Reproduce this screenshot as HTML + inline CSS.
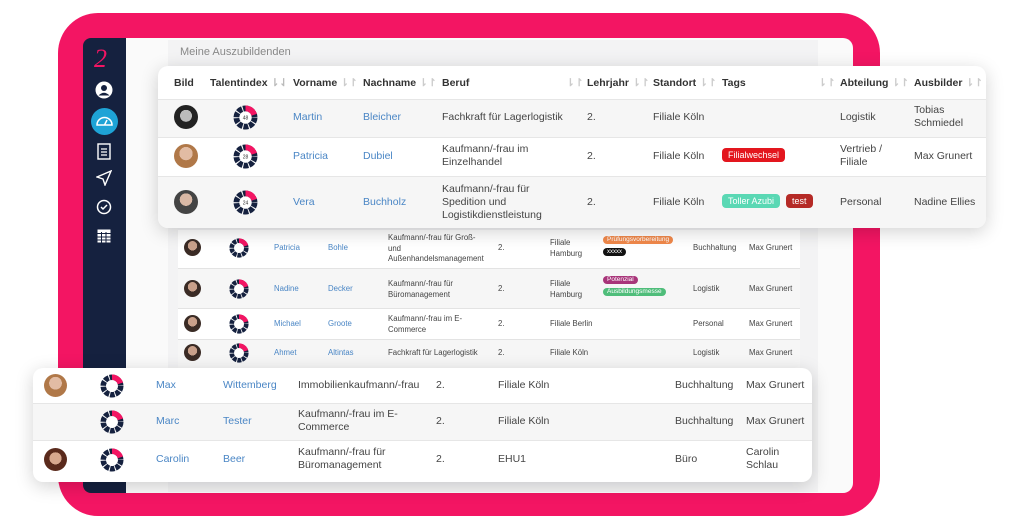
<!DOCTYPE html>
<html><head><meta charset="utf-8"><style>
*{margin:0;padding:0;box-sizing:border-box}
body{width:1024px;height:529px;background:#fff;position:relative;overflow:hidden;font-family:"Liberation Sans",sans-serif;color:#444}
.a{position:absolute}
.pink{left:58px;top:13px;width:822px;height:503px;background:#f31563;border-radius:40px}
.side{left:83px;top:38px;width:43px;height:455px;background:#15213f;border-radius:8px 0 0 8px}
.panel{left:126px;top:38px;width:727px;height:455px;background:#fafafa;border-radius:0 10px 10px 0}
.inner{left:168px;top:40px;width:650px;height:452px;background:#f3f3f4}
.card{background:#fff;border-radius:10px;box-shadow:0 4px 18px rgba(0,0,0,.18)}
.t{position:absolute;font-size:10.5px;color:#444;line-height:13px}
.b{color:#4a86c5}
.h{font-weight:bold;color:#333;font-size:10.5px}
.s{font-size:7.8px;line-height:10.5px}
.row{position:absolute;left:0;right:0}
.g{background:#f6f6f6}
.bd{border-top:1px solid #e6e6e6}
.tag{position:absolute;border-radius:4px;color:#fff;font-size:9px;padding:1px 6px;line-height:12px}
.av{position:absolute;border-radius:50%;background:radial-gradient(circle at 50% 40%,#c9a08a 0 35%,#3a2b25 36%)}
.av2{background:radial-gradient(circle at 50% 40%,#e2bca4 0 35%,#b07848 36%)}
</style></head><body>
<svg width="0" height="0" style="position:absolute"><defs>
<g id="d"><circle cx="10" cy="10" r="7.3" fill="none" stroke="#15213f" stroke-width="4.6" stroke-dasharray="3.8 0.8"/><path d="M10 2.7 A7.3 7.3 0 0 1 17 7.8" fill="none" stroke="#f31563" stroke-width="4.6"/><circle cx="10" cy="10" r="4.6" fill="#fff"/></g>
</defs></svg>
<div class="a pink"></div>
<div class="a side"></div>
<div class="a panel"></div>
<div class="a inner"></div>
<div class="a" style="left:94px;top:44px;color:#f31563;font-size:26px;font-style:italic;font-family:'Liberation Serif',serif">2</div>
<svg class="a" style="left:95px;top:81px" width="18" height="18"><circle cx="9" cy="9" r="8.5" fill="#fff"/><circle cx="9" cy="7" r="3" fill="#15213f"/><path d="M3.5 14.5 Q9 9 14.5 14.5" fill="#15213f"/></svg>
<svg class="a" style="left:91px;top:108px" width="27" height="27"><circle cx="13.5" cy="13.5" r="13.5" fill="#1ea3d6"/><path d="M6 17 A7.5 7.5 0 0 1 21 17 Z" fill="none" stroke="#fff" stroke-width="1.5"/><path d="M13.5 17 L16 12" stroke="#fff" stroke-width="1.5"/></svg>
<svg class="a" style="left:97px;top:142px" width="14" height="18"><rect x="1" y="2" width="12" height="15" fill="none" stroke="#fff" stroke-width="1.4"/><path d="M4 7h6M4 10h6M4 13h6" stroke="#fff" stroke-width="1.2"/></svg>
<svg class="a" style="left:96px;top:170px" width="16" height="16"><path d="M1 7 L15 1 L9 15 L7 9 Z" fill="none" stroke="#fff" stroke-width="1.4"/></svg>
<svg class="a" style="left:96px;top:199px" width="16" height="16"><circle cx="8" cy="8" r="6.5" fill="none" stroke="#fff" stroke-width="1.5"/><path d="M5 8l2 2 4-4" fill="none" stroke="#fff" stroke-width="1.5"/></svg>
<svg class="a" style="left:97px;top:229px" width="14" height="14"><rect x="0.5" y="0.5" width="13" height="13" fill="#fff"/><path d="M0 4.5h14M0 8h14M0 11h14M4.5 3v11M9 3v11" stroke="#15213f" stroke-width="1"/></svg>
<div class="t" style="left:180px;top:46px;color:#888;font-size:11px">Meine Auszubildenden</div>

<div class="a" style="left:178px;top:230px;width:622px;height:138px;background:#fff"></div>
<div class="a g" style="left:178px;top:268px;width:622px;height:40px"></div>
<div class="a g" style="left:178px;top:339px;width:622px;height:29px"></div>
<div class="a" style="left:178px;top:268px;width:622px;border-top:1px solid #e3e3e3"></div>
<div class="a" style="left:178px;top:308px;width:622px;border-top:1px solid #e3e3e3"></div>
<div class="a" style="left:178px;top:339px;width:622px;border-top:1px solid #e3e3e3"></div>
<div class="av" style="left:184px;top:239px;width:17px;height:17px"></div>
<div class="av" style="left:184px;top:280px;width:17px;height:17px"></div>
<div class="av" style="left:184px;top:315px;width:17px;height:17px"></div>
<div class="av" style="left:184px;top:344px;width:17px;height:17px"></div>
<svg class="a" style="left:229px;top:238px" width="20" height="20"><use href="#d"/></svg>
<svg class="a" style="left:229px;top:279px" width="20" height="20"><use href="#d"/></svg>
<svg class="a" style="left:229px;top:314px" width="20" height="20"><use href="#d"/></svg>
<svg class="a" style="left:229px;top:343px" width="20" height="20"><use href="#d"/></svg>
<div class="t s b" style="left:274px;top:243px">Patricia</div><div class="t s b" style="left:328px;top:243px">Bohle</div>
<div class="t s" style="left:388px;top:233px">Kaufmann/-frau für Groß-<br>und<br>Außenhandelsmanagement</div>
<div class="t s" style="left:498px;top:243px">2.</div><div class="t s" style="left:550px;top:238px">Filiale<br>Hamburg</div>
<div class="tag" style="left:603px;top:236px;background:#f0884a;font-size:6.5px;line-height:8px;padding:0 4px">Prüfungsvorbereitung</div>
<div class="tag" style="left:603px;top:248px;background:#111;font-size:6px;line-height:8px;padding:0 4px">xxxxx</div>
<div class="t s" style="left:693px;top:243px">Buchhaltung</div><div class="t s" style="left:749px;top:243px">Max Grunert</div>
<div class="t s b" style="left:274px;top:284px">Nadine</div><div class="t s b" style="left:328px;top:284px">Decker</div>
<div class="t s" style="left:388px;top:279px">Kaufmann/-frau für<br>Büromanagement</div>
<div class="t s" style="left:498px;top:284px">2.</div><div class="t s" style="left:550px;top:279px">Filiale<br>Hamburg</div>
<div class="tag" style="left:603px;top:276px;background:#a8357a;font-size:6.5px;line-height:8px;padding:0 4px">Potenzial</div>
<div class="tag" style="left:603px;top:288px;background:#4fbd7a;font-size:6.5px;line-height:8px;padding:0 4px">Ausbildungsmesse</div>
<div class="t s" style="left:693px;top:284px">Logistik</div><div class="t s" style="left:749px;top:284px">Max Grunert</div>
<div class="t s b" style="left:274px;top:319px">Michael</div><div class="t s b" style="left:328px;top:319px">Groote</div>
<div class="t s" style="left:388px;top:314px">Kaufmann/-frau im E-<br>Commerce</div>
<div class="t s" style="left:498px;top:319px">2.</div><div class="t s" style="left:550px;top:319px">Filiale Berlin</div>
<div class="t s" style="left:693px;top:319px">Personal</div><div class="t s" style="left:749px;top:319px">Max Grunert</div>
<div class="t s b" style="left:274px;top:348px">Ahmet</div><div class="t s b" style="left:328px;top:348px">Altintas</div>
<div class="t s" style="left:388px;top:348px">Fachkraft für Lagerlogistik</div>
<div class="t s" style="left:498px;top:348px">2.</div><div class="t s" style="left:550px;top:348px">Filiale Köln</div>
<div class="t s" style="left:693px;top:348px">Logistik</div><div class="t s" style="left:749px;top:348px">Max Grunert</div>

<div class="a card" style="left:158px;top:66px;width:828px;height:162px;overflow:hidden">
 <div class="row g bd" style="top:33px;height:38px"></div>
 <div class="row bd" style="top:71px;height:39px"></div>
 <div class="row g bd" style="top:110px;height:52px"></div>
</div>
<div class="t h" style="left:174px;top:77px">Bild</div>
<div class="t h" style="left:210px;top:77px">Talentindex <span style="color:#bbb">⇂⇃</span></div>
<div class="t h" style="left:293px;top:77px">Vorname <span style="color:#ccc">⇂↾</span></div>
<div class="t h" style="left:363px;top:77px">Nachname <span style="color:#ccc">⇂↾</span></div>
<div class="t h" style="left:442px;top:77px">Beruf</div><div class="t h" style="left:566px;top:77px;color:#ccc">⇂↾</div>
<div class="t h" style="left:587px;top:77px">Lehrjahr <span style="color:#ccc">⇂↾</span></div>
<div class="t h" style="left:653px;top:77px">Standort <span style="color:#ccc">⇂↾</span></div>
<div class="t h" style="left:722px;top:77px">Tags</div><div class="t h" style="left:818px;top:77px;color:#ccc">⇂↾</div>
<div class="t h" style="left:840px;top:77px">Abteilung <span style="color:#ccc">⇂↾</span></div>
<div class="t h" style="left:914px;top:77px">Ausbilder <span style="color:#ccc">⇂↾</span></div>
<div class="av" style="left:174px;top:105px;width:24px;height:24px;background:radial-gradient(circle at 50% 45%,#bbb 0 33%,#222 34%)"></div>
<div class="av av2" style="left:174px;top:144px;width:24px;height:24px"></div>
<div class="av" style="left:174px;top:190px;width:24px;height:24px;background:radial-gradient(circle at 50% 40%,#d9b8a5 0 33%,#444 34%)"></div>
<svg class="a" style="left:233px;top:105px" width="25" height="25" viewBox="0 0 20 20"><use href="#d"/><text x="10" y="11.5" font-size="4" text-anchor="middle" fill="#333">48</text></svg>
<svg class="a" style="left:233px;top:144px" width="25" height="25" viewBox="0 0 20 20"><use href="#d"/><text x="10" y="11.5" font-size="4" text-anchor="middle" fill="#333">28</text></svg>
<svg class="a" style="left:233px;top:190px" width="25" height="25" viewBox="0 0 20 20"><use href="#d"/><text x="10" y="11.5" font-size="4" text-anchor="middle" fill="#333">24</text></svg>
<div class="t b" style="left:293px;top:111px">Martin</div><div class="t b" style="left:363px;top:111px">Bleicher</div>
<div class="t" style="left:442px;top:111px">Fachkraft für Lagerlogistik</div>
<div class="t" style="left:587px;top:111px">2.</div><div class="t" style="left:653px;top:111px">Filiale Köln</div>
<div class="t" style="left:840px;top:111px">Logistik</div><div class="t" style="left:914px;top:104px;line-height:13px">Tobias<br>Schmiedel</div>
<div class="t b" style="left:293px;top:150px">Patricia</div><div class="t b" style="left:363px;top:150px">Dubiel</div>
<div class="t" style="left:442px;top:143px">Kaufmann/-frau im<br>Einzelhandel</div>
<div class="t" style="left:587px;top:150px">2.</div><div class="t" style="left:653px;top:150px">Filiale Köln</div>
<div class="tag" style="left:722px;top:148px;background:#e3161e">Filialwechsel</div>
<div class="t" style="left:840px;top:143px">Vertrieb /<br>Filiale</div><div class="t" style="left:914px;top:150px">Max Grunert</div>
<div class="t b" style="left:293px;top:196px">Vera</div><div class="t b" style="left:363px;top:196px">Buchholz</div>
<div class="t" style="left:442px;top:183px">Kaufmann/-frau für<br>Spedition und<br>Logistikdienstleistung</div>
<div class="t" style="left:587px;top:196px">2.</div><div class="t" style="left:653px;top:196px">Filiale Köln</div>
<div class="tag" style="left:722px;top:194px;background:#5ad8b4">Toller Azubi</div>
<div class="tag" style="left:786px;top:194px;background:#b52a26">test</div>
<div class="t" style="left:840px;top:196px">Personal</div><div class="t" style="left:914px;top:196px">Nadine Ellies</div>

<div class="a card" style="left:33px;top:368px;width:779px;height:114px;overflow:hidden">
 <div class="row g bd" style="top:35px;height:37px"></div>
 <div class="row bd" style="top:72px;height:42px;left:0"></div>
</div>
<div class="av av2" style="left:44px;top:374px;width:23px;height:23px"></div>
<div class="av" style="left:44px;top:448px;width:23px;height:23px;background:radial-gradient(circle at 50% 45%,#d8a88e 0 35%,#5a2a1c 36%)"></div>
<svg class="a" style="left:100px;top:374px" width="24" height="24" viewBox="0 0 20 20"><use href="#d"/></svg>
<svg class="a" style="left:100px;top:410px" width="24" height="24" viewBox="0 0 20 20"><use href="#d"/></svg>
<svg class="a" style="left:100px;top:448px" width="24" height="24" viewBox="0 0 20 20"><use href="#d"/></svg>
<div class="t b" style="left:156px;top:379px">Max</div><div class="t b" style="left:223px;top:379px">Wittemberg</div>
<div class="t" style="left:298px;top:379px">Immobilienkaufmann/-frau</div>
<div class="t" style="left:436px;top:379px">2.</div><div class="t" style="left:498px;top:379px">Filiale Köln</div>
<div class="t" style="left:675px;top:379px">Buchhaltung</div><div class="t" style="left:746px;top:379px">Max Grunert</div>
<div class="t b" style="left:156px;top:415px">Marc</div><div class="t b" style="left:223px;top:415px">Tester</div>
<div class="t" style="left:298px;top:408px">Kaufmann/-frau im E-<br>Commerce</div>
<div class="t" style="left:436px;top:415px">2.</div><div class="t" style="left:498px;top:415px">Filiale Köln</div>
<div class="t" style="left:675px;top:415px">Buchhaltung</div><div class="t" style="left:746px;top:415px">Max Grunert</div>
<div class="t b" style="left:156px;top:453px">Carolin</div><div class="t b" style="left:223px;top:453px">Beer</div>
<div class="t" style="left:298px;top:446px">Kaufmann/-frau für<br>Büromanagement</div>
<div class="t" style="left:436px;top:453px">2.</div><div class="t" style="left:498px;top:453px">EHU1</div>
<div class="t" style="left:675px;top:453px">Büro</div><div class="t" style="left:746px;top:446px">Carolin<br>Schlau</div>
</body></html>
